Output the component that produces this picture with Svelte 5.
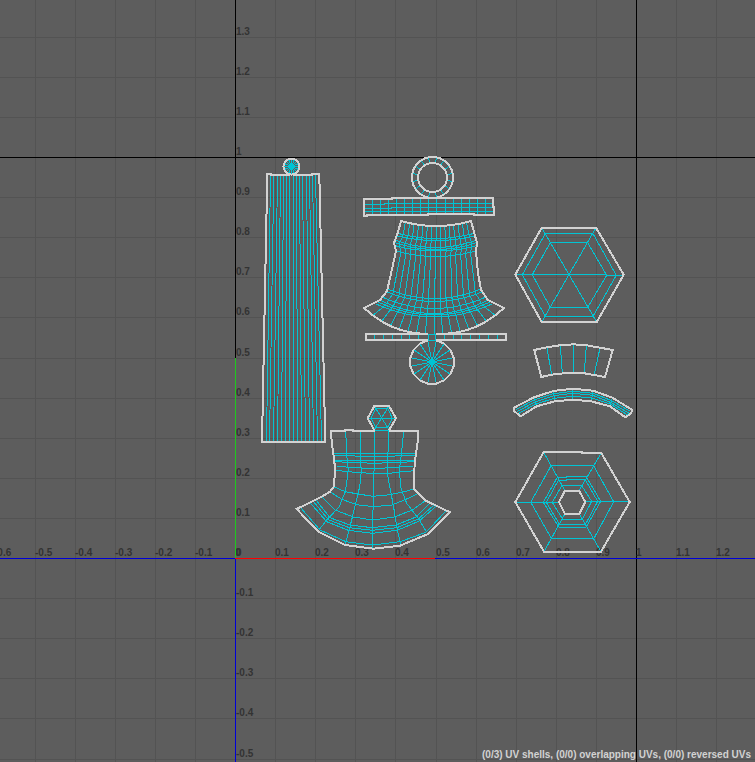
<script>
  const OX = 235;
  const OY = 558;
  const STEP = 40.1;

  const px = (n) => Math.round(OX + n * STEP);
  const py = (n) => Math.round(OY - n * STEP);
  const range = (a, b) => Array.from({ length: b - a + 1 }, (_, i) => a + i);
  const name = (n) => String(n / 10);

  const columns = range(-6, 40);
  const rows = range(-20, 13);
  const columnLabels = range(-6, 12);
  const rowLabels = range(-5, 13);

  // Shell data is stored at three units per pixel, relative to a shell origin.
  const path = (ox, oy, pts, close = false) =>
    'M' + pts.map(([x, y]) => `${(ox + x / 3).toFixed(1)} ${(oy + y / 3).toFixed(1)}`).join('L') + (close ? 'Z' : '');
  const group = (ox, oy, lists, close = false) => lists.map((p) => path(ox, oy, p, close)).join('');
  const spokes = (cx, cy, r0, r1, n, off) =>
    range(0, n - 1)
      .map((i) => {
        const a = ((i + off) * 2 * Math.PI) / n;
        const c = Math.cos(a);
        const s = Math.sin(a);
        return `M${(cx + c * r0).toFixed(1)} ${(cy + s * r0).toFixed(1)}L${(cx + c * r1).toFixed(1)} ${(cy + s * r1).toFixed(1)}`;
      })
      .join('');

  // Tall strip
  const stripTop = [61, 71, 82, 91, 100, 109, 118, 130, 139, 148, 157, 169, 178, 187, 196];
  const stripEnd = [49, 58, 70, 82, 94, 106, 118, 130, 142, 154, 166, 178, 190, 202, 214];
  const stripWire = group(250, 145, stripTop.map((x, i) => [[x + 0.5, 90], [stripEnd[i] + 0.5, 888]]));
  const stripEdge = path(250, 145, [[119, 90], [63, 90], [63, 87], [52, 87], [36, 891], [226, 891], [208, 87], [187, 87], [187, 90], [130, 90]]);

  // Cross bar
  const barWire =
    group(355, 150, [52, 76, 100, 124, 148, 172, 196, 220, 244, 270, 294, 319, 343, 367, 391].map((x) => [[x, 146], [x, 193]])) +
    group(355, 150, [
      [[28, 163], [88, 163], [88, 160], [415, 160]],
      [[28, 175], [108, 175], [108, 172], [415, 172]],
      [[28, 184], [415, 184]],
      [[220, 145], [244, 145]]
    ]);
  const barEdge = path(355, 150, [[220, 144], [110, 144], [110, 147], [26, 147], [28, 197], [37, 197], [37, 195], [219, 195], [219, 192], [357, 192], [357, 195], [417, 195], [418, 171], [415, 171], [415, 144], [244, 144]]);

  // Round bell: left x, right x, side y, centre y
  const rings = [
    [401, 471, 221, 226],
    [398.5, 473.5, 233.5, 238.5],
    [397.5, 474.5, 236, 240.5],
    [395, 476.5, 240, 247.5],
    [394.5, 477, 242.5, 249.5],
    [394.5, 477, 245.5, 251],
    [396, 475.5, 251, 256.5],
    [387.5, 481, 289, 298.5],
    [387, 482, 292, 301.5],
    [382, 486, 297, 308.5],
    [380, 488, 300, 313.5],
    [378, 490, 302, 315],
    [376, 492, 304, 317],
    [364, 504, 308, 334]
  ];
  const ringPoint = ([xl, xr, ye, yc], i, k) => {
    const t = i / 16;
    const u = Math.abs(2 * t - 1);
    return [xl + (xr - xl) * t, yc + (ye - yc) * u ** k];
  };
  const exact = (pts) => 'M' + pts.map(([x, y]) => `${x.toFixed(1)} ${y.toFixed(1)}`).join('L');
  const ringLine = (r, k = 2) => range(0, 16).map((i) => ringPoint(r, i, k));
  const bellWire =
    rings.slice(1, 13).map((r) => exact(ringLine(r))).join('') +
    range(1, 15).map((i) => exact(rings.map((r, n) => ringPoint(r, i, n === 13 ? 2.5 : 2)))).join('');
  const hem = ringLine(rings[13], 2.5);
  const bellEdge =
    exact([...hem.slice(0, 8).reverse(), [380, 300], [387, 291], [390, 278], [396, 251], [394, 243], [398, 232], ...ringLine(rings[0]), [474, 232], [477, 243], [476, 252], [478, 273], [481, 290], [488, 300], ...hem.slice(9).reverse()]);

  // Thin bar and disc
  const thinWire = group(355, 280, [57, 85, 112, 139, 163, 190, 219, 241, 268, 295, 319, 346, 373, 400, 427].map((x) => [[x, 162], [x, 180]])) + 'M428 334H436M428 340H436';
  const thinEdge = 'M428 334H366V340H428M436 334H506V340H436';
  const disc = 'M' + range(0, 15).map((i) => {
    const a = -Math.PI / 2 + ((i + 0.5) * Math.PI) / 8;
    return `${(432 + 22 * Math.cos(a)).toFixed(1)} ${(362 + 22 * Math.sin(a)).toFixed(1)}`;
  }).join('L');

  // Faceted bell
  const facetWire = group(290, 395, [
    [[167, 107], [170, 180], [175, 225], [172, 250], [166, 290], [148, 335], [110, 375], [85, 407]],
    [[211, 107], [211, 190], [214, 230], [209, 275], [196, 330], [180, 395], [166, 448]],
    [[254, 107], [254, 200], [251, 240], [250, 300], [247, 460]],
    [[296, 107], [292, 235], [300, 280], [310, 330], [320, 395], [332, 450]],
    [[341, 107], [334, 180], [328, 225], [333, 280], [350, 325], [385, 370], [410, 412]],
    [[130, 175], [378, 175]], [[131, 182], [254, 184], [377, 182]], [[132, 196], [377, 196]], [[132, 200], [254, 205], [376, 200]],
    [[140, 213], [175, 217], [254, 221], [330, 216], [370, 213]],
    [[136, 226], [175, 230], [254, 236], [292, 236], [328, 231], [373, 227]],
    [[131, 275], [166, 290], [209, 298], [250, 304], [300, 299], [335, 292], [373, 282]],
    [[120, 290], [155, 313], [200, 329], [250, 335], [305, 330], [348, 313], [385, 295]],
    [[95, 305], [135, 345], [190, 366], [247, 375], [313, 366], [367, 345], [405, 318]],
    [[78, 315], [120, 368], [180, 390], [247, 398], [318, 390], [378, 366], [420, 325]],
    [[70, 319], [115, 374], [178, 398], [247, 406], [320, 398], [385, 372], [432, 330]],
    [[60, 323], [110, 380], [175, 406], [247, 415], [322, 406], [388, 378], [438, 334]],
    [[32, 338], [90, 405], [168, 440], [247, 450], [330, 440], [408, 412], [468, 348]],
    [[254, 107], [296, 107]],
    [[243, 70], [258, 40], [293, 40], [307, 70], [293, 98], [258, 98], [243, 70]],
    [[233, 70], [318, 70]], [[253, 33], [297, 104]], [[297, 33], [253, 104]]
  ]);
  const facetEdge = group(290, 395, [
    [[254, 108], [190, 108], [190, 105], [165, 105], [165, 108], [123, 108], [125, 140], [130, 175], [136, 225], [131, 275], [120, 290], [95, 305], [20, 342], [85, 410], [165, 450], [250, 461], [330, 452], [412, 418], [480, 352], [405, 316], [373, 282], [373, 225], [376, 190], [383, 140], [384, 108], [297, 108]],
    [[253, 106], [233, 70], [253, 33], [297, 33], [318, 70], [297, 106]]
  ]);

  // Upper hexagon
  const hexWire =
    group(505, 220, [
      [[121, 41], [264, 41], [334, 166], [264, 289], [121, 289], [52, 164]],
      [[136, 68], [248, 68], [305, 166], [248, 262], [136, 262], [82, 164]]
    ], true) +
    group(505, 220, [[[31, 163], [305, 163], [305, 165], [356, 165]], [[110, 23], [275, 306]], [[273, 23], [110, 306]]]);
  const hexEdge = path(505, 220, [[110, 23], [273, 23], [356, 164], [275, 306], [110, 306], [31, 164]], true);

  // Fan and arc
  const arcTop = [[27, 218], [87, 187], [145, 168], [203, 161], [265, 167], [322, 188], [381, 224]];
  const fanWire = group(505, 335, [
    [[126, 39], [140, 119]], [[166, 32], [172, 113]], [[205, 28], [205, 113]], [[244, 33], [238, 113]], [[285, 39], [268, 118]],
    [[32, 224], [87, 195], [145, 176], [203, 169], [265, 175], [320, 197], [376, 229]],
    [[35, 230], [90, 201], [146, 182], [203, 175], [263, 181], [319, 203], [372, 235]],
    [[40, 236], [92, 207], [148, 190], [203, 184], [261, 189], [317, 208], [368, 240]],
    [[203, 161], [203, 194]], [[145, 168], [150, 199]], [[87, 187], [95, 214]], [[265, 167], [258, 199]], [[322, 188], [315, 214]]
  ]);
  const fanEdge = group(505, 335, [
    [[88, 45], [130, 36], [165, 31], [205, 28], [245, 31], [285, 38], [323, 45], [300, 126], [268, 120], [238, 115], [175, 115], [140, 119], [109, 126]],
    [...arcTop, [379, 235], [361, 247], [315, 214], [258, 199], [203, 194], [150, 199], [95, 214], [47, 244], [27, 228]]
  ], true);

  // Lower hexagon
  const nestWire =
    group(505, 440, [
      [[139, 76], [265, 76], [326, 185], [267, 295], [139, 295], [77, 187]],
      [[157, 112], [184, 112], [184, 109], [243, 109], [287, 184], [243, 262], [162, 262], [115, 187]],
      [[160, 121], [183, 121], [183, 118], [240, 118], [278, 184], [241, 254], [164, 254], [124, 187]],
      [[170, 137], [230, 137], [260, 184], [232, 238], [173, 238], [142, 187]]
    ], true) +
    group(505, 440, [
      [[116, 37], [180, 152]], [[289, 39], [222, 152]], [[374, 186], [241, 184]], [[288, 335], [223, 221]], [[117, 335], [180, 221]], [[31, 187], [162, 187]]
    ]);
  const nestEdge = group(505, 440, [
    [[116, 36], [230, 36], [230, 39], [289, 39], [374, 186], [288, 335], [117, 335], [31, 186]],
    [[180, 152], [222, 152], [241, 186], [223, 221], [180, 221], [162, 186]]
  ], true);

  const wires = [stripWire, barWire, bellWire, thinWire, facetWire, hexWire, fanWire, nestWire,
    spokes(291.5, 166.5, 0, 8, 16, 0), spokes(432.5, 177.5, 15, 21, 16, 0.5), spokes(432, 362, 0, 22, 16, 0.5)];
  const edges = [stripEdge, barEdge, bellEdge, thinEdge, disc, facetEdge, hexEdge, fanEdge, nestEdge];
</script>

<main class="editor">
  <svg class="canvas" role="img" aria-label="UV layout">
    <g class="grid">
      {#each columns as n}<rect x={px(n)} y="0" width="1" height="100%" />{/each}
      {#each rows as n}<rect x="0" y={py(n)} width="100%" height="1" />{/each}
    </g>
    <g class="tile">
      <rect x={OX} y="0" width="1" height={OY} />
      <rect x={px(10)} y="0" width="1" height="100%" />
      <rect x="0" y={py(10)} width="100%" height="1" />
    </g>
    <g class="labels">
      {#each columnLabels as n}<text x={px(n)} y={OY - 2}>{name(n)}</text>{/each}
      {#each rowLabels as n}<text x={OX + 1} y={py(n) - 2}>{name(n)}</text>{/each}
    </g>
    <rect class="axis" x="0" y={OY} width="100%" height="1" />
    <rect class="axis" x={OX} y={OY} width="1" height="100%" />
    <rect class="v" x={OX} y={py(5)} width="1" height={OY - py(5)} />
    <rect class="u" x={OX} y={OY} width="200" height="1" />
    <g class="wire">
      {#each wires as d}<path {d} />{/each}
    </g>
    <g class="edge">
      {#each edges as d}<path {d} />{/each}
      <circle cx="291.5" cy="166.5" r="8" />
      <circle cx="432.5" cy="177.5" r="20.5" />
      <circle cx="432.5" cy="177.5" r="14.5" />
    </g>
  </svg>
  <p class="status">(0/3) UV shells, (0/0) overlapping UVs, (0/0) reversed UVs</p>
</main>

<style>
  :global(body) {
    margin: 0;
    background: #5d5d5d;
  }
  .editor {
    position: relative;
    height: 100vh;
    overflow: hidden;
    background: #5d5d5d;
    font-family: "Liberation Sans", Arial, sans-serif;
  }
  .canvas {
    display: block;
    width: 100%;
    height: 100%;
    shape-rendering: crispEdges;
  }
  .grid { fill: #535353; }
  .tile { fill: #000; }
  .labels {
    fill: #333;
    font-size: 10px;
    font-weight: 700;
  }
  .axis { fill: #0000d8; }
  .u { fill: #f00; }
  .v { fill: #1ec81e; }
  .wire path {
    fill: none;
    stroke: #00c4d4;
    stroke-width: 1;
  }
  .edge path,
  .edge circle {
    fill: none;
    stroke: #d2d2d2;
    stroke-width: 2;
  }
  .status {
    position: absolute;
    right: 4px;
    bottom: 1px;
    margin: 0;
    color: #d2d2d2;
    font-size: 10px;
    line-height: 12px;
    font-weight: 700;
    white-space: nowrap;
  }
</style>
